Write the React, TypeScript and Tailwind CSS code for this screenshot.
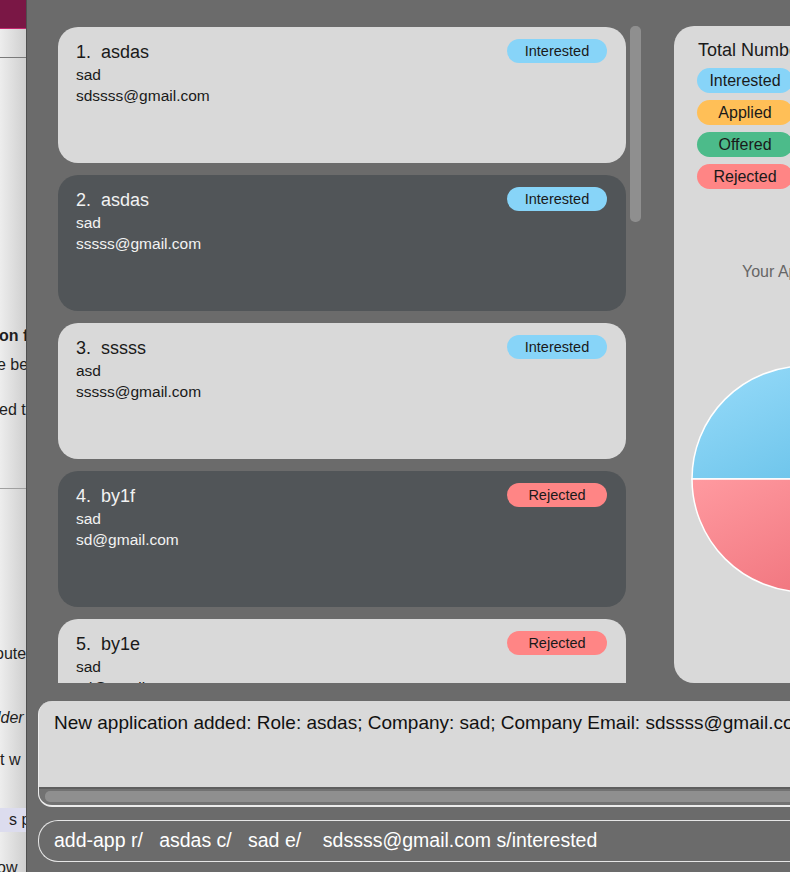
import React from 'react';

type Status = 'Interested' | 'Applied' | 'Offered' | 'Rejected';

interface Application {
  role: string;
  company: string;
  email: string;
  status: Status;
}

const applications: Application[] = [
  { role: 'asdas', company: 'sad', email: 'sdssss@gmail.com', status: 'Interested' },
  { role: 'asdas', company: 'sad', email: 'sssss@gmail.com', status: 'Interested' },
  { role: 'sssss', company: 'asd', email: 'sssss@gmail.com', status: 'Interested' },
  { role: 'by1f', company: 'sad', email: 'sd@gmail.com', status: 'Rejected' },
  { role: 'by1e', company: 'sad', email: 'sd@gmail.com', status: 'Rejected' },
];

const statusColor: Record<Status, string> = {
  Interested: 'bg-[#87d4f8]',
  Applied: 'bg-[#ffbf57]',
  Offered: 'bg-[#4cbb8a]',
  Rejected: 'bg-[#ff8585]',
};

// the window behind the app, only a sliver of it shows
const BackgroundDoc: React.FC = () => (
  <div className="w-[26px] shrink-0 h-full overflow-hidden bg-gradient-to-r from-[#ededed] to-[#cfcfcf] text-[16px] text-[#1e1e1e] font-['Liberation_Sans',sans-serif] whitespace-nowrap">
    <div className="h-[28px] bg-[#7a1745]" />
    <div className="h-px bg-[#c3286e]" />
    <div className="h-[29px] border-b border-[#7a7a7a]" />
    <div className="mt-[268px] h-[20px] leading-[20px] -ml-[1px] font-bold">on f</div>
    <div className="mt-[9px] h-[20px] leading-[20px] -ml-[3px]">e be</div>
    <div className="mt-[25px] h-[20px] leading-[20px] -ml-[1px]">ed t</div>
    <div className="h-[69px] border-b border-[#a0a0a0]" />
    <div className="mt-[155px] h-[20px] leading-[20px] -ml-[5px]">oute</div>
    <div className="mt-[44px] h-[20px] leading-[20px] -ml-[3px] italic">lder</div>
    <div className="mt-[22px] h-[20px] leading-[20px] -ml-[3px]">'t w</div>
    <div className="mt-[38px] h-[24px] leading-[24px] bg-[#dcdcee] pl-[9px]">s p</div>
    <div className="mt-[26px] h-[20px] leading-[20px] -ml-[3px]">ow</div>
  </div>
);

const Badge: React.FC<{ status: Status; className?: string }> = ({ status, className = '' }) => (
  <div className={`${statusColor[status]} ${className} rounded-full flex items-center justify-center text-[#1a1a1a] shrink-0`}>
    {status}
  </div>
);

const AppCard: React.FC<{ app: Application; index: number }> = ({ app, index }) => {
  const dark = index % 2 === 1;
  return (
    <div
      className={`h-[136px] shrink-0 rounded-[20px] flex justify-between pl-[18px] pr-[19px] pt-[12px] ${
        dark ? 'bg-[#515558] text-[#f2f2f2]' : 'bg-[#d9d9d9] text-[#1a1a1a]'
      }`}
    >
      <div className="pt-[2px]">
        <div className="text-[18px] leading-[22px] whitespace-pre">{`${index + 1}.  ${app.role}`}</div>
        <div className="text-[15.5px] leading-[21px] mt-[1px]">{app.company}</div>
        <div className="text-[15.5px] leading-[21px]">{app.email}</div>
      </div>
      <Badge status={app.status} className="w-[100px] h-[24px] text-[14.5px] pt-[1px]" />
    </div>
  );
};

const PieChart: React.FC = () => (
  <svg width="228" height="228" viewBox="0 0 228 228" className="shrink-0 -ml-[7px]">
    <defs>
      <linearGradient id="blueGrad" x1="0" y1="0" x2="1" y2="1">
        <stop offset="0%" stopColor="#99dcfa" />
        <stop offset="100%" stopColor="#5fbde6" />
      </linearGradient>
      <linearGradient id="redGrad" x1="0" y1="0" x2="1" y2="1">
        <stop offset="0%" stopColor="#ff9aa0" />
        <stop offset="100%" stopColor="#ec6a74" />
      </linearGradient>
    </defs>
    <path d="M1 114 A113 113 0 0 1 227 114 Z" fill="url(#blueGrad)" stroke="#ffffff" strokeWidth="1.5" />
    <path d="M1 114 A113 113 0 0 0 227 114 Z" fill="url(#redGrad)" stroke="#ffffff" strokeWidth="1.5" />
  </svg>
);

const StatsPanel: React.FC = () => (
  <div className="w-[320px] h-[657px] shrink-0 rounded-[20px] bg-[#d9d9d9] pl-[24px] pt-[13px] overflow-hidden">
    <div className="text-[18px] leading-[22px] text-[#1a1a1a] whitespace-nowrap">Total Number of Applications</div>
    <div className="mt-[7px] -ml-[1px] flex flex-col gap-[7px]">
      {(['Interested', 'Applied', 'Offered', 'Rejected'] as Status[]).map((s) => (
        <Badge key={s} status={s} className="w-[96px] h-[25px] text-[16px]" />
      ))}
    </div>
    <div className="mt-[73px] pl-[44px] text-[16px] leading-[20px] text-[#666666] whitespace-nowrap">Your Applications</div>
    <div className="mt-[83px]">
      <PieChart />
    </div>
  </div>
);

const App: React.FC = () => {
  return (
    <div className="w-[790px] h-[872px] overflow-hidden flex font-['Liberation_Sans',Arial,sans-serif]">
      <BackgroundDoc />
      <div className="flex-1 min-w-0 h-full bg-[#6b6b6b] border-l border-[#4f4f4f] flex flex-col overflow-hidden">
        {/* list + stats */}
        <div className="flex pt-[26px] pl-[31px] h-[683px] shrink-0">
          <div className="flex gap-[4px] shrink-0">
            <div className="w-[568px] h-[657px] overflow-hidden flex flex-col gap-[12px] pt-[1px]">
              {applications.map((app, i) => (
                <AppCard key={i} app={app} index={i} />
              ))}
            </div>
            <div className="w-[11px] h-[196px] rounded-[5px] bg-[#8f8f8f]" />
          </div>
          <div className="ml-[33px]">
            <StatsPanel />
          </div>
        </div>

        {/* result display */}
        <div className="mt-[18px] ml-[11px] w-[790px] h-[106px] shrink-0 rounded-l-[14px] bg-[#d9d9d9] border-b-[2px] border-l border-[#ececec] flex flex-col overflow-hidden">
          <div className="flex-1 pl-[15px] pt-[10px] text-[19px] leading-[24px] text-[#111111] whitespace-nowrap">
            New application added: Role: asdas; Company: sad; Company Email: sdssss@gmail.com; Status: interested
          </div>
          <div className="h-[18px] bg-[#727272] border-t-[2px] border-[#5e5e5e] pl-[6px] pt-[2px]">
            <div className="h-[11px] rounded-[5px] bg-[#8f8f8f]" />
          </div>
        </div>

        {/* command box */}
        <div className="mt-[13px] ml-[11px] w-[790px] h-[42px] shrink-0 rounded-l-[20px] border border-r-0 border-[#e6e6e6] flex items-center pl-[15px]">
          <span className="text-[19.5px] text-white whitespace-pre">add-app r/   asdas c/   sad e/    sdssss@gmail.com s/interested</span>
        </div>
      </div>
    </div>
  );
};

export default App;
